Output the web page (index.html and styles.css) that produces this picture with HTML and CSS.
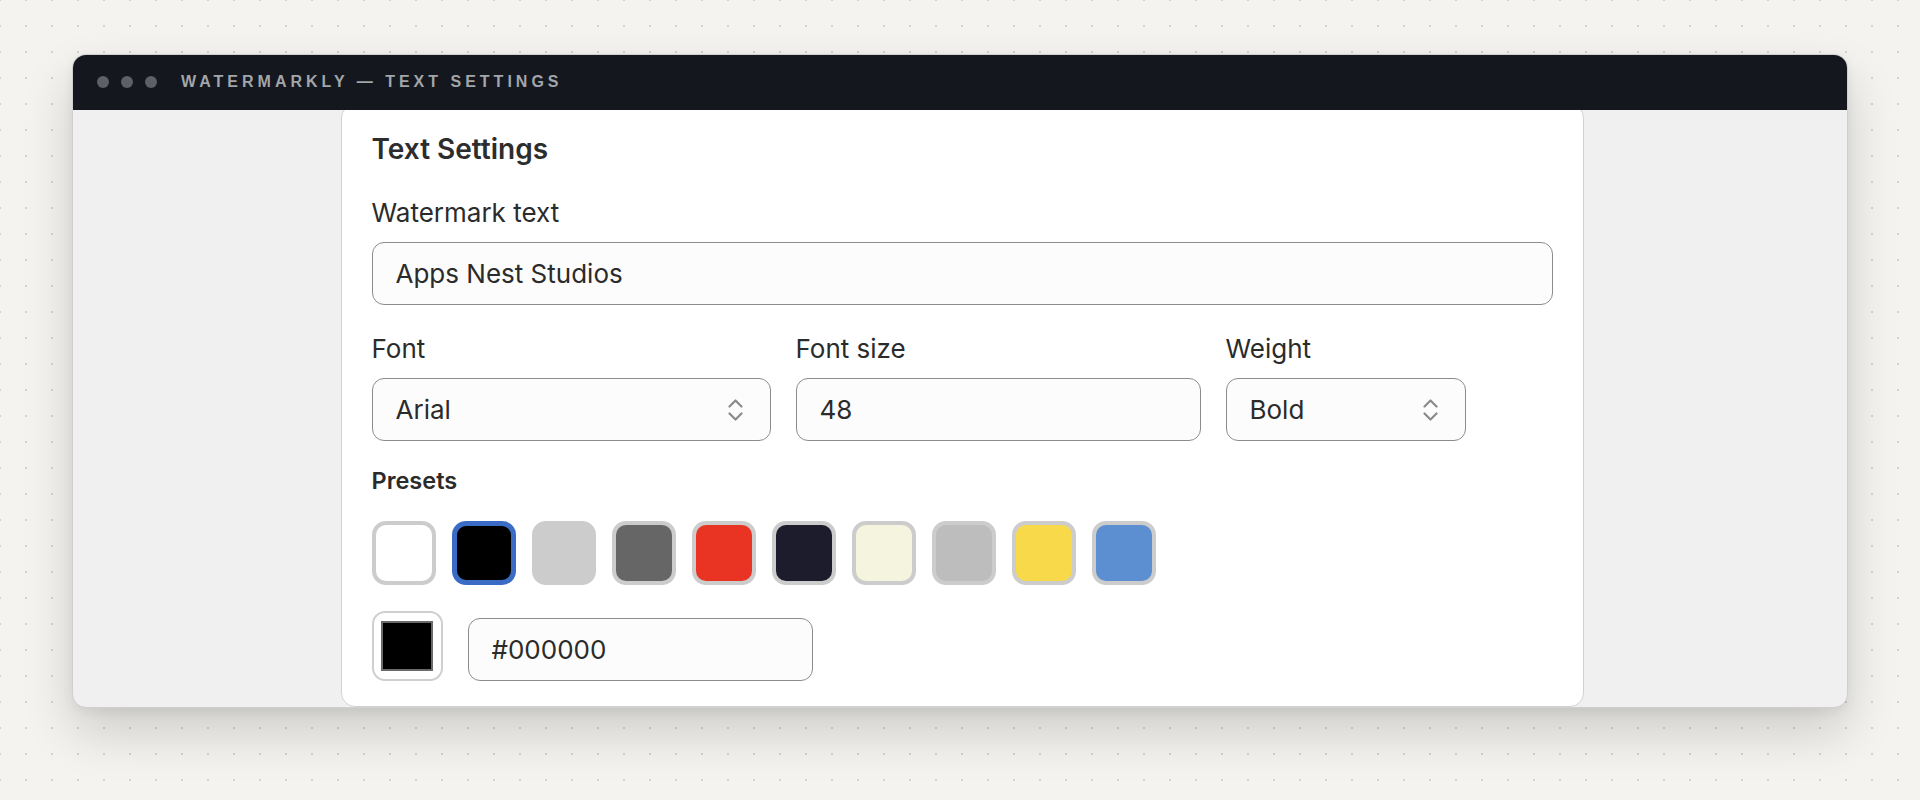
FILE: index.html
```html
<!DOCTYPE html>
<html lang="en">
<head>
<meta charset="utf-8">
<title>Watermarkly — Text Settings</title>
<link rel="stylesheet" href="styles.css">
</head>
<body>
  <div class="window">
    <div class="titlebar">
      <div class="dots"><span class="dot"></span><span class="dot"></span><span class="dot"></span></div>
      <div class="title">WATERMARKLY — TEXT SETTINGS</div>
    </div>
    <div class="winbody">
      <section class="card">
        <h1 class="heading">Text Settings</h1>

        <div class="field field-wide">
          <label class="label">Watermark text</label>
          <input class="input" type="text" value="Apps Nest Studios">
        </div>

        <div class="row">
          <div class="field">
            <label class="label">Font</label>
            <div class="select"><span>Arial</span>
              <svg class="chev" viewBox="0 0 15 26" width="15" height="26"><path d="M1.5 9.5 L7.5 3.5 L13.5 9.5 M1.5 16.5 L7.5 22.5 L13.5 16.5"/></svg>
            </div>
          </div>
          <div class="field">
            <label class="label">Font size</label>
            <input class="input" type="text" value="48">
          </div>
          <div class="field">
            <label class="label">Weight</label>
            <div class="select"><span>Bold</span>
              <svg class="chev" viewBox="0 0 15 26" width="15" height="26"><path d="M1.5 9.5 L7.5 3.5 L13.5 9.5 M1.5 16.5 L7.5 22.5 L13.5 16.5"/></svg>
            </div>
          </div>
        </div>

        <div class="presets-label">Presets</div>
        <div class="swatches">
          <span class="swatch sw-white"></span>
          <span class="swatch sw-black selected"></span>
          <span class="swatch sw-light"></span>
          <span class="swatch sw-gray"></span>
          <span class="swatch sw-red"></span>
          <span class="swatch sw-navy"></span>
          <span class="swatch sw-cream"></span>
          <span class="swatch sw-silver"></span>
          <span class="swatch sw-yellow"></span>
          <span class="swatch sw-blue"></span>
        </div>

        <div class="color-row">
          <div class="picker"><span class="picker-fill"></span></div>
          <input class="input hex" type="text" value="#000000">
        </div>
      </section>
    </div>
  </div>
</body>
</html>
```
FILE: styles.css
```css
* { box-sizing: border-box; }

html, body { margin: 0; }

body {
  width: 1920px;
  height: 800px;
  padding: 54px 72px 0 72px;
  background-color: #f4f3ef;
  background-image: radial-gradient(circle, #d4d2cc 1px, transparent 1.4px);
  background-size: 26px 26px;
  background-position: -13px -13px;
  font-family: "Inter", "Noto Sans", sans-serif;
  color: #2b2b2b;
  overflow: hidden;
}

.window {
  width: 1776px;
  border-radius: 14px;
  overflow: hidden;
  background: #f0f0f0;
  border: 1px solid #cfcfcf;
  box-shadow: 0 24px 50px rgba(0, 0, 0, 0.16), 0 4px 12px rgba(0, 0, 0, 0.06);
}

.titlebar {
  height: 56px;
  margin: -1px -1px 0 -1px;
  background: #14171d;
  display: flex;
  align-items: center;
  padding-left: 25px;
}

.dots { display: flex; gap: 12px; }
.dot {
  width: 12px;
  height: 12px;
  border-radius: 50%;
  background: #5d6065;
}

.title {
  margin-left: 24px;
  font-family: "Liberation Sans", Arial, sans-serif;
  font-weight: 700;
  font-size: 16px;
  letter-spacing: 4px;
  color: #a2a5aa;
}

.winbody {
  display: flex;
  justify-content: center;
  padding-left: 4px;
  overflow: hidden;
}

.card {
  width: 1243px;
  margin-top: -6px;
  background: #ffffff;
  border: 1px solid #d2d2d2;
  border-radius: 14px;
  padding: 28px 30px 25px 30px;
}

.heading {
  margin: 0;
  font-size: 28px;
  line-height: 32px;
  font-weight: 600;
  color: #2d2d2d;
}

.field {
  display: flex;
  flex-direction: column;
  gap: 14px;
}

.field-wide { margin-top: 33px; }

.label {
  font-size: 26px;
  line-height: 30px;
  color: #2b2b2b;
}

.input {
  height: 63px;
  width: 100%;
  border: 1px solid #8c8c8c;
  border-radius: 12px;
  background: #fcfcfc;
  padding: 0 23px;
  font-family: "Inter", "Noto Sans", sans-serif;
  font-size: 26px;
  color: #2b2b2b;
  outline: none;
}

.row {
  margin-top: 29px;
  display: grid;
  grid-template-columns: 399px 405px 240px;
  column-gap: 25px;
}

.select {
  height: 63px;
  border: 1px solid #8c8c8c;
  border-radius: 12px;
  background: #fcfcfc;
  padding: 0 27px 0 23px;
  display: flex;
  align-items: center;
  justify-content: space-between;
  font-size: 26px;
  color: #2b2b2b;
}

.chev path {
  fill: none;
  stroke: #8a8a8a;
  stroke-width: 2.2;
  stroke-linecap: round;
  stroke-linejoin: round;
}

.presets-label {
  margin-top: 25px;
  font-size: 23.5px;
  line-height: 30px;
  font-weight: 600;
  color: #2b2b2b;
}

.swatches {
  margin-top: 25px;
  display: flex;
  gap: 16px;
}

.swatch {
  width: 64px;
  height: 64px;
  border-radius: 14px;
  border: 4px solid #cccccc;
}

.swatch.selected { border: 5px solid #3b6cc5; }

.sw-white { background: #ffffff; }
.sw-black { background: #000000; }
.sw-light { background: #cccccc; }
.sw-gray { background: #666666; }
.sw-red { background: #e93424; }
.sw-navy { background: #1c1c2d; }
.sw-cream { background: #f5f4df; }
.sw-silver { background: #bdbdbd; }
.sw-yellow { background: #f8d94a; }
.sw-blue { background: #5b8fd2; }

.color-row {
  margin-top: 26px;
  display: flex;
  align-items: flex-end;
  gap: 25px;
}

.picker {
  width: 71px;
  height: 70px;
  border: 2px solid #cfcfcf;
  border-radius: 13px;
  background: #ffffff;
  display: flex;
  align-items: center;
  justify-content: center;
}

.picker-fill {
  width: 52px;
  height: 50px;
  background: #000000;
  border: 2px solid #6a6a6a;
}

.hex { width: 345px; }
```
